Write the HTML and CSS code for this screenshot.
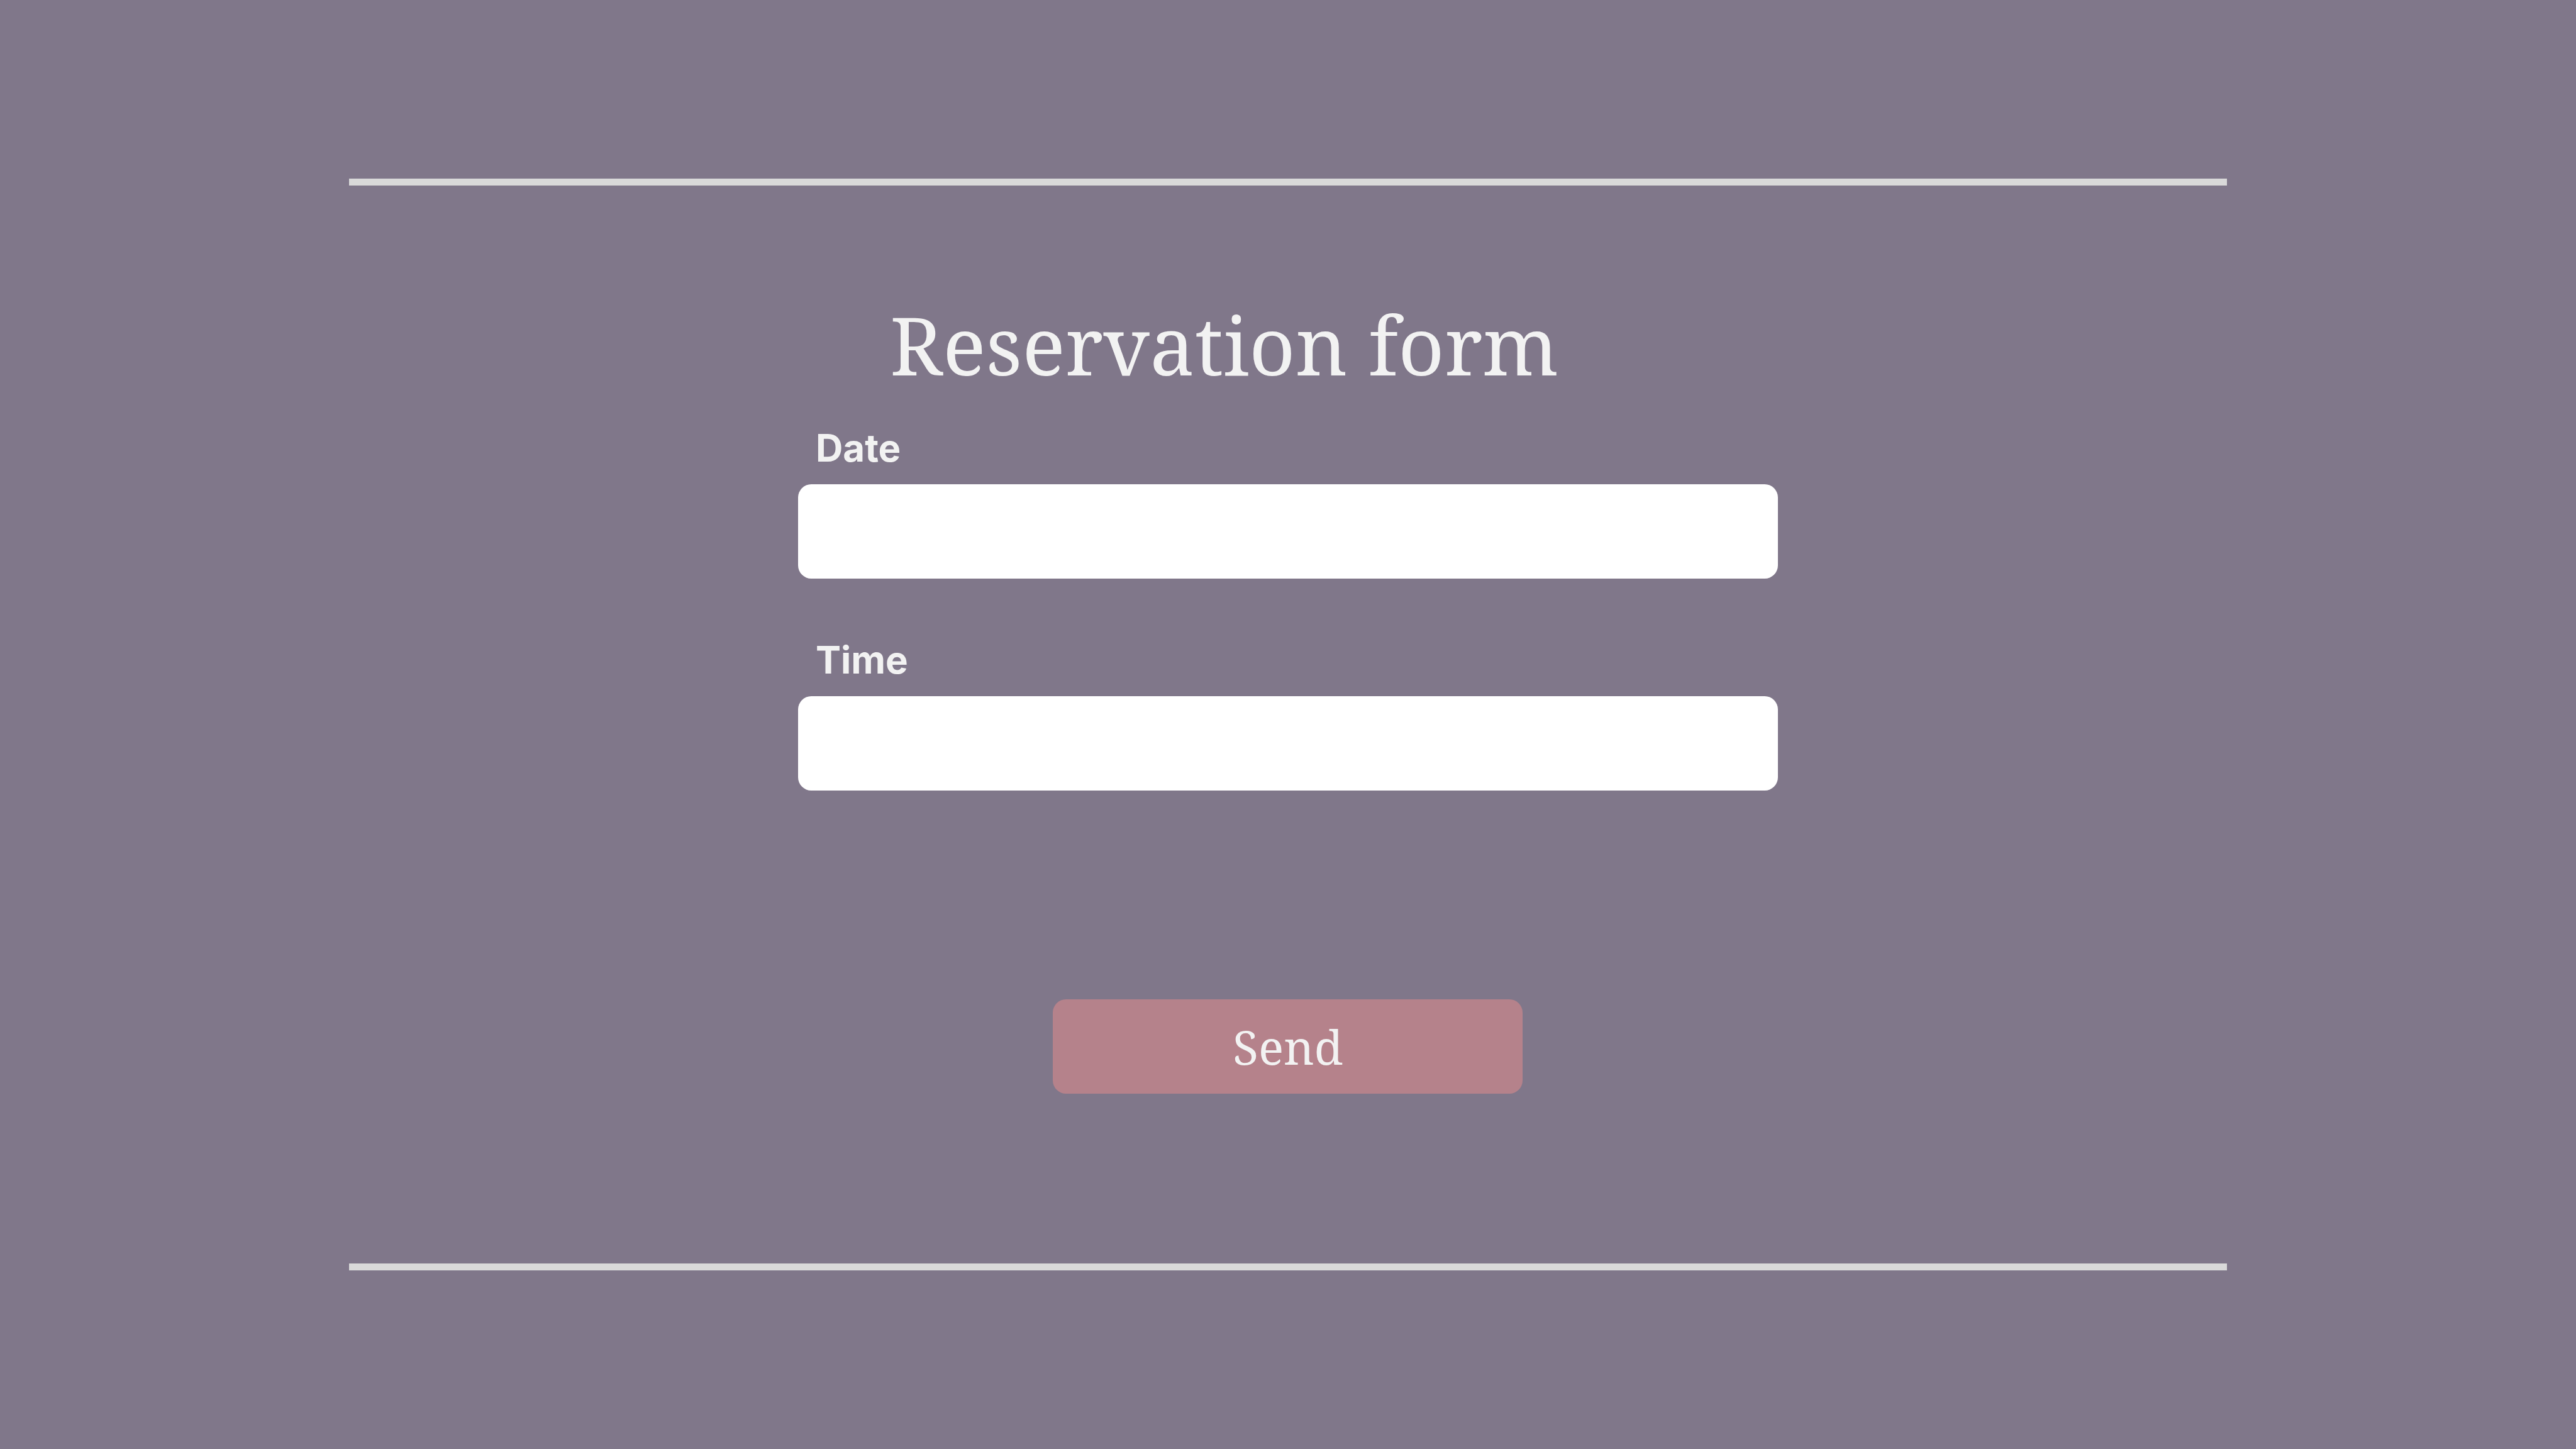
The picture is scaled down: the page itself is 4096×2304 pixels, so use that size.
FILE: index.html
```html
<!DOCTYPE html>
<html lang="en">
<head>
<meta charset="utf-8">
<title>Reservation form</title>
<meta name="viewport" content="width=device-width, initial-scale=1">
<link rel="stylesheet" href="styles.css">
</head>
<body>
<main class="panel">
  <form class="form">
    <h1 class="title">Reservation form</h1>
    <div class="field">
      <label class="label" for="date">Date</label>
      <input class="input" id="date" name="date" type="text">
    </div>
    <div class="field">
      <label class="label" for="time">Time</label>
      <input class="input" id="time" name="time" type="text">
    </div>
    <button class="send" type="submit">Send</button>
  </form>
</main>
</body>
</html>
```
FILE: styles.css
```css
* {
  box-sizing: border-box;
}

body {
  min-height: 100vh;
  margin: 0;
  padding: 284px 0;
  display: flex;
  justify-content: center;
  background: #80778a;
  color: #f2f2f2;
}

.panel {
  width: 72.92%;
  display: flex;
  justify-content: center;
  border-top: 11px solid #d9d9d9;
  border-bottom: 11px solid #d9d9d9;
}

.form {
  width: 1558px;
  max-width: 100%;
  padding-top: 165px;
  display: flex;
  flex-direction: column;
}

.title {
  margin: 0 0 38px 146px;
  font-family: "Noto Serif", "Droid Serif", "DejaVu Serif", serif;
  font-size: 128px;
  font-weight: 400;
  line-height: 176px;
}

.field {
  margin-bottom: 91px;
  display: flex;
  flex-direction: column;
  gap: 20px;
}

.label {
  padding-left: 28px;
  font-family: Inter, sans-serif;
  font-size: 60px;
  font-weight: 700;
  line-height: 76px;
}

.input {
  width: 100%;
  height: 150px;
  padding: 0 28px;
  border: 0;
  border-radius: 21px;
  background: #fff;
  font-family: Inter, sans-serif;
  font-size: 60px;
}

.send {
  width: 747px;
  max-width: 100%;
  height: 150px;
  margin-top: 241px;
  align-self: center;
  border: 0;
  border-radius: 21px;
  background: #b5828b;
  color: inherit;
  font-family: "Noto Serif", "Droid Serif", "DejaVu Serif", serif;
  font-size: 75px;
}
```
